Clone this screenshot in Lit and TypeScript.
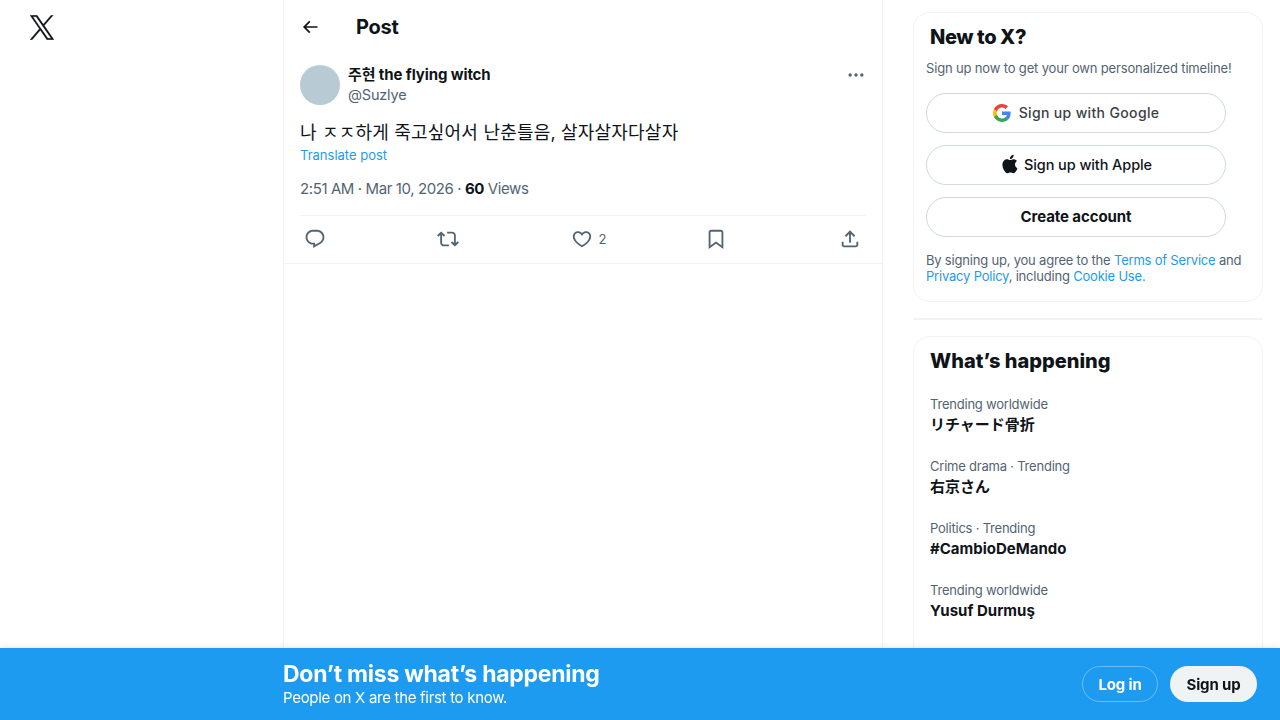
import { LitElement, html, css, svg } from "lit";
import { customElement } from "lit/decorators.js";

const icon = (d: string, cls = "") =>
  html`<svg class="icon ${cls}" viewBox="0 0 24 24" aria-hidden="true"><path d=${d}></path></svg>`;

const LOGO =
  "M714.163 519.284L1160.89 0H1055.03L667.137 450.887L357.328 0H0L468.492 681.821L0 1226.37H105.866L515.491 750.218L842.672 1226.37H1200L714.137 519.284H714.163ZM569.165 687.828L521.697 619.934L144.011 79.6944H306.615L611.412 515.685L658.88 583.579L1055.08 1150.3H892.476L569.165 687.854V687.828Z";
const BACK = "M7.414 13l5.043 5.04-1.414 1.42L3.586 12l7.457-7.46 1.414 1.42L7.414 11H21v2H7.414z";
const MORE =
  "M3 12c0-1.1.9-2 2-2s2 .9 2 2-.9 2-2 2-2-.9-2-2zm9 2c1.1 0 2-.9 2-2s-.9-2-2-2-2 .9-2 2 .9 2 2 2zm7 0c1.1 0 2-.9 2-2s-.9-2-2-2-2 .9-2 2 .9 2 2 2z";
const REPLY =
  "M1.751 10c0-4.42 3.584-8 8.005-8h4.366c4.49 0 8.129 3.64 8.129 8.13 0 2.96-1.607 5.68-4.196 7.11l-8.054 4.46v-3.69h-.067c-4.49.1-8.183-3.51-8.183-8.01zm8.005-6c-3.317 0-6.005 2.69-6.005 6 0 3.37 2.77 6.08 6.138 6.01l.351-.01h1.761v2.3l5.087-2.81c1.951-1.08 3.163-3.13 3.163-5.36 0-3.39-2.744-6.13-6.129-6.13H9.756z";
const REPOST =
  "M4.5 3.88l4.432 4.14-1.364 1.46L5.5 7.55V16c0 1.1.896 2 2 2H13v2H7.5c-2.209 0-4-1.79-4-4V7.55L1.432 9.48.068 8.02 4.5 3.88zM16.5 6H11V4h5.5c2.209 0 4 1.79 4 4v8.45l2.068-1.93 1.364 1.46-4.432 4.14-4.432-4.14 1.364-1.46 2.068 1.93V8c0-1.1-.896-2-2-2z";
const LIKE =
  "M16.697 5.5c-1.222-.06-2.679.51-3.89 2.16l-.805 1.09-.806-1.09C9.984 6.01 8.526 5.44 7.304 5.5c-1.243.07-2.349.78-2.91 1.91-.552 1.12-.633 2.78.479 4.82 1.074 1.97 3.257 4.27 7.129 6.61 3.87-2.34 6.052-4.64 7.126-6.61 1.111-2.04 1.03-3.7.477-4.82-.561-1.13-1.666-1.84-2.908-1.91zm4.187 7.69c-1.351 2.48-4.001 5.12-8.379 7.67l-.503.3-.504-.3c-4.379-2.55-7.029-5.19-8.382-7.67-1.36-2.5-1.41-4.86-.514-6.67.887-1.79 2.647-2.91 4.601-3.01 1.651-.09 3.368.56 4.798 2.01 1.429-1.45 3.146-2.1 4.796-2.01 1.954.1 3.714 1.22 4.601 3.01.896 1.81.846 4.17-.514 6.67z";
const BOOKMARK =
  "M4 4.5C4 3.12 5.119 2 6.5 2h11C18.881 2 20 3.12 20 4.5v18.44l-8-5.71-8 5.71V4.5zM6.5 4c-.276 0-.5.22-.5.5v14.56l6-4.29 6 4.29V4.5c0-.28-.224-.5-.5-.5h-11z";
const SHARE =
  "M12 2.59l5.7 5.7-1.41 1.42L13 6.41V16h-2V6.41l-3.3 3.3-1.41-1.42L12 2.59zM21 15l-.02 3.51c0 1.38-1.12 2.49-2.5 2.49H5.5C4.11 21 3 19.88 3 18.5V15h2v3.5c0 .28.22.5.5.5h12.98c.28 0 .5-.22.5-.5L19 15h2z";
const APPLE =
  "M16.365 1.43c0 1.14-.493 2.27-1.177 3.08-.744.9-1.99 1.57-2.987 1.57-.12 0-.23-.02-.3-.03-.01-.06-.04-.22-.04-.39 0-1.15.572-2.27 1.206-2.98.804-.94 2.142-1.64 3.248-1.68.03.13.05.28.05.43zm4.565 15.71c-.03.07-.463 1.58-1.518 3.12-.945 1.34-1.94 2.71-3.43 2.71-1.517 0-1.9-.88-3.63-.88-1.698 0-2.302.91-3.67.91-1.377 0-2.332-1.26-3.428-2.8-1.287-1.82-2.323-4.63-2.323-7.28 0-4.28 2.797-6.55 5.552-6.55 1.448 0 2.675.95 3.6.95.865 0 2.222-1.01 3.902-1.01.613 0 2.886.06 4.374 2.19-.13.09-2.383 1.37-2.383 4.19 0 3.26 2.854 4.42 2.955 4.45z";

const googleG = svg`
  <path fill="#4285F4" d="M23.5 12.3c0-.8-.1-1.6-.2-2.3H12v4.5h6.5c-.3 1.5-1.1 2.7-2.4 3.6v3h3.9c2.2-2.1 3.5-5.1 3.5-8.8z"></path>
  <path fill="#34A853" d="M12 24c3.2 0 6-1.1 8-2.9l-3.9-3c-1.1.7-2.5 1.2-4.1 1.2-3.1 0-5.8-2.1-6.7-5H1.3v3.1C3.3 21.3 7.3 24 12 24z"></path>
  <path fill="#FBBC05" d="M5.3 14.3c-.2-.7-.4-1.5-.4-2.3s.1-1.6.4-2.3V6.6h-4C.5 8.2 0 10 0 12s.5 3.8 1.3 5.4l4-3.1z"></path>
  <path fill="#EA4335" d="M12 4.7c1.8 0 3.3.6 4.6 1.8l3.4-3.4C18 1.2 15.2 0 12 0 7.3 0 3.3 2.7 1.3 6.6l4 3.1c.9-2.9 3.6-5 6.7-5z"></path>
`;

const TRENDS = [
  { meta: "Trending worldwide", name: "リチャード骨折" },
  { meta: "Crime drama · Trending", name: "右京さん" },
  { meta: "Politics · Trending", name: "#CambioDeMando" },
  { meta: "Trending worldwide", name: "Yusuf Durmuş" },
];

@customElement("app-root")
export class AppRoot extends LitElement {
  static override styles = css`
    :host {
      display: block;
      height: 720px;
      overflow: hidden;
      background: #fff;
      color: #0f1419;
      font-family: Inter, "Noto Sans CJK KR", "Noto Sans CJK JP", sans-serif;
      font-size: 15px;
    }
    a {
      color: #1d9bf0;
      text-decoration: none;
    }
    .icon {
      display: block;
      width: 22px;
      height: 22px;
      fill: currentColor;
      flex: none;
    }
    .page {
      display: flex;
      height: 720px;
    }
    .nav {
      width: 283px;
      flex: none;
      box-sizing: border-box;
      padding: 15px 0 0 30px;
    }
    .logo {
      display: block;
      width: 24px;
      height: 25px;
      fill: #0f1419;
      stroke: #0f1419;
      stroke-width: 14;
    }
    .main {
      width: 600px;
      flex: none;
      box-sizing: border-box;
      border-left: 1px solid #eff3f4;
      border-right: 1px solid #eff3f4;
    }
    .topbar {
      display: flex;
      align-items: center;
      height: 53px;
      padding-left: 16px;
    }
    .topbar .icon {
      width: 20px;
      height: 20px;
    }
    .topbar h1 {
      margin: 0 0 0 36px;
      font-size: 20px;
      line-height: 24px;
      font-weight: 700;
      letter-spacing: -0.25px;
    }
    .post {
      padding: 12px 16px 0;
      border-bottom: 1px solid #eff3f4;
    }
    .author {
      display: flex;
      gap: 8px;
      height: 40px;
    }
    .avatar {
      width: 40px;
      height: 40px;
      border-radius: 50%;
      background: #b8cad4;
    }
    .who {
      flex: 1;
      line-height: 20px;
    }
    .name {
      font-weight: 700;
      font-size: 15px;
      letter-spacing: -0.1px;
    }
    .handle {
      color: #536471;
      font-size: 14.5px;
      letter-spacing: -0.2px;
    }
    .more {
      width: 20px;
      height: 20px;
      color: #536471;
    }
    .body {
      margin: 15px 0 0;
      font-size: 18px;
      line-height: 25px;
      letter-spacing: 0.2px;
    }
    .translate {
      display: block;
      font-size: 13px;
      line-height: 20px;
    }
    .stamp {
      margin-top: 14px;
      padding-bottom: 16px;
      border-bottom: 1px solid #eff3f4;
      line-height: 20px;
      color: #536471;
      font-size: 15px;
      letter-spacing: -0.4px;
    }
    .stamp b {
      color: #0f1419;
      font-weight: 700;
    }
    .actions {
      display: flex;
      justify-content: space-between;
      align-items: center;
      height: 47px;
      box-sizing: border-box;
      padding: 0 5px 2px 4px;
      color: #536471;
    }
    .action {
      display: flex;
      align-items: center;
      gap: 5px;
      font-size: 13px;
      width: 22px;
      white-space: nowrap;
    }
    .action.nudged {
      transform: translateX(-1px);
    }
    .action.nudged span {
      margin-left: 1px;
    }
    .side {
      width: 350px;
      flex: none;
      margin-left: 30px;
      padding-top: 12px;
    }
    .card {
      border: 1px solid #eff3f4;
      border-radius: 16px;
      box-sizing: border-box;
    }
    .signup {
      height: 290px;
      padding: 12px 12px 0;
    }
    .card h2 {
      margin: 0;
      font-size: 20px;
      line-height: 24px;
      font-weight: 800;
      letter-spacing: -0.4px;
      padding-left: 4px;
    }
    .lead {
      margin: 11px 0 0;
      font-size: 13px;
      line-height: 16px;
      color: #536471;
      letter-spacing: -0.16px;
    }
    .btns {
      display: flex;
      flex-direction: column;
      gap: 12px;
      margin-top: 17px;
      width: 300px;
    }
    .btn {
      display: flex;
      align-items: center;
      justify-content: center;
      gap: 4px;
      height: 40px;
      box-sizing: border-box;
      padding-bottom: 2px;
      border: 1px solid #cfd9de;
      border-radius: 20px;
      font-size: 14.5px;
      font-weight: 500;
      letter-spacing: -0.1px;
      color: #0f1419;
    }
    .btn .icon {
      width: 20px;
      height: 20px;
    }
    .btn.google {
      gap: 8px;
      color: #3c4043;
      font-size: 14px;
      letter-spacing: 0.35px;
    }
    .btn.google .icon {
      width: 18px;
      height: 18px;
      margin-top: 2px;
    }
    .btn.strong {
      font-size: 15px;
      font-weight: 700;
    }
    .terms {
      margin: 15px 0 0;
      font-size: 13px;
      line-height: 16px;
      color: #536471;
      letter-spacing: -0.2px;
    }
    .divider {
      height: 2px;
      margin: 16px 0;
      background: #eff3f4;
    }
    .happening {
      height: 340px;
      padding: 12px 16px 0;
    }
    .card.happening h2 {
      padding-left: 0;
      letter-spacing: 0;
    }
    .trends {
      margin-top: 21px;
    }
    .trend {
      height: 62px;
    }
    .trend .meta {
      font-size: 13px;
      line-height: 20px;
      height: 21px;
      color: #536471;
      letter-spacing: -0.22px;
    }
    .trend .topic {
      font-size: 15px;
      line-height: 20px;
      font-weight: 700;
    }
    .banner {
      position: fixed;
      left: 0;
      right: 0;
      bottom: 0;
      height: 72px;
      background: #1d9bf0;
      box-shadow: 0 0 8px rgba(0, 0, 0, 0.12);
      display: flex;
      align-items: center;
      box-sizing: border-box;
      padding: 0 23px 0 283px;
      color: #fff;
    }
    .pitch {
      flex: 1;
    }
    .pitch .big {
      font-size: 23px;
      line-height: 28px;
      font-weight: 700;
      letter-spacing: -0.26px;
      margin-top: -1px;
    }
    .pitch .small {
      font-size: 15px;
      line-height: 20px;
      letter-spacing: -0.3px;
    }
    .cta {
      display: flex;
      align-items: center;
      justify-content: center;
      height: 36px;
      box-sizing: border-box;
      border-radius: 18px;
      font-size: 15px;
      font-weight: 700;
      letter-spacing: -0.15px;
    }
    .login {
      width: 76px;
      border: 1px solid rgba(255, 255, 255, 0.35);
      margin-right: 12px;
    }
    .register {
      width: 87px;
      background: #eff3f4;
      color: #0f1419;
    }
  `;

  override render() {
    return html`
      <div class="page">
        <div class="nav">
          <svg class="logo" viewBox="0 0 1200 1227" aria-hidden="true"><path d=${LOGO}></path></svg>
        </div>
        <div class="main">
          <div class="topbar">${icon(BACK)}<h1>Post</h1></div>
          <article class="post">
            <div class="author">
              <div class="avatar"></div>
              <div class="who">
                <div class="name">주현 the flying witch</div>
                <div class="handle">@Suzlye</div>
              </div>
              ${icon(MORE, "more")}
            </div>
            <p class="body">나 ㅈㅈ하게 죽고싶어서 난춘틀음, 살자살자다살자</p>
            <a class="translate">Translate post</a>
            <div class="stamp">2:51 AM · Mar 10, 2026 · <b>60</b> Views</div>
            <div class="actions">
              <div class="action">${icon(REPLY)}</div>
              <div class="action nudged">${icon(REPOST)}</div>
              <div class="action nudged">${icon(LIKE)}<span>2</span></div>
              <div class="action">${icon(BOOKMARK)}</div>
              <div class="action">${icon(SHARE)}</div>
            </div>
          </article>
        </div>
        <div class="side">
          <section class="card signup">
            <h2>New to X?</h2>
            <p class="lead">Sign up now to get your own personalized timeline!</p>
            <div class="btns">
              <div class="btn google">
                <svg class="icon" viewBox="0 0 24 24" aria-hidden="true">${googleG}</svg>
                Sign up with Google
              </div>
              <div class="btn">${icon(APPLE)} Sign up with Apple</div>
              <div class="btn strong">Create account</div>
            </div>
            <p class="terms">
              By signing up, you agree to the <a>Terms of Service</a> and
              <a>Privacy Policy</a>, including <a>Cookie Use.</a>
            </p>
          </section>
          <div class="divider"></div>
          <section class="card happening">
            <h2>What’s happening</h2>
            <div class="trends">
              ${TRENDS.map(
                (t) => html`
                  <div class="trend">
                    <div class="meta">${t.meta}</div>
                    <div class="topic">${t.name}</div>
                  </div>
                `
              )}
            </div>
          </section>
        </div>
      </div>
      <div class="banner">
        <div class="pitch">
          <div class="big">Don’t miss what’s happening</div>
          <div class="small">People on X are the first to know.</div>
        </div>
        <div class="cta login">Log in</div>
        <div class="cta register">Sign up</div>
      </div>
    `;
  }
}
